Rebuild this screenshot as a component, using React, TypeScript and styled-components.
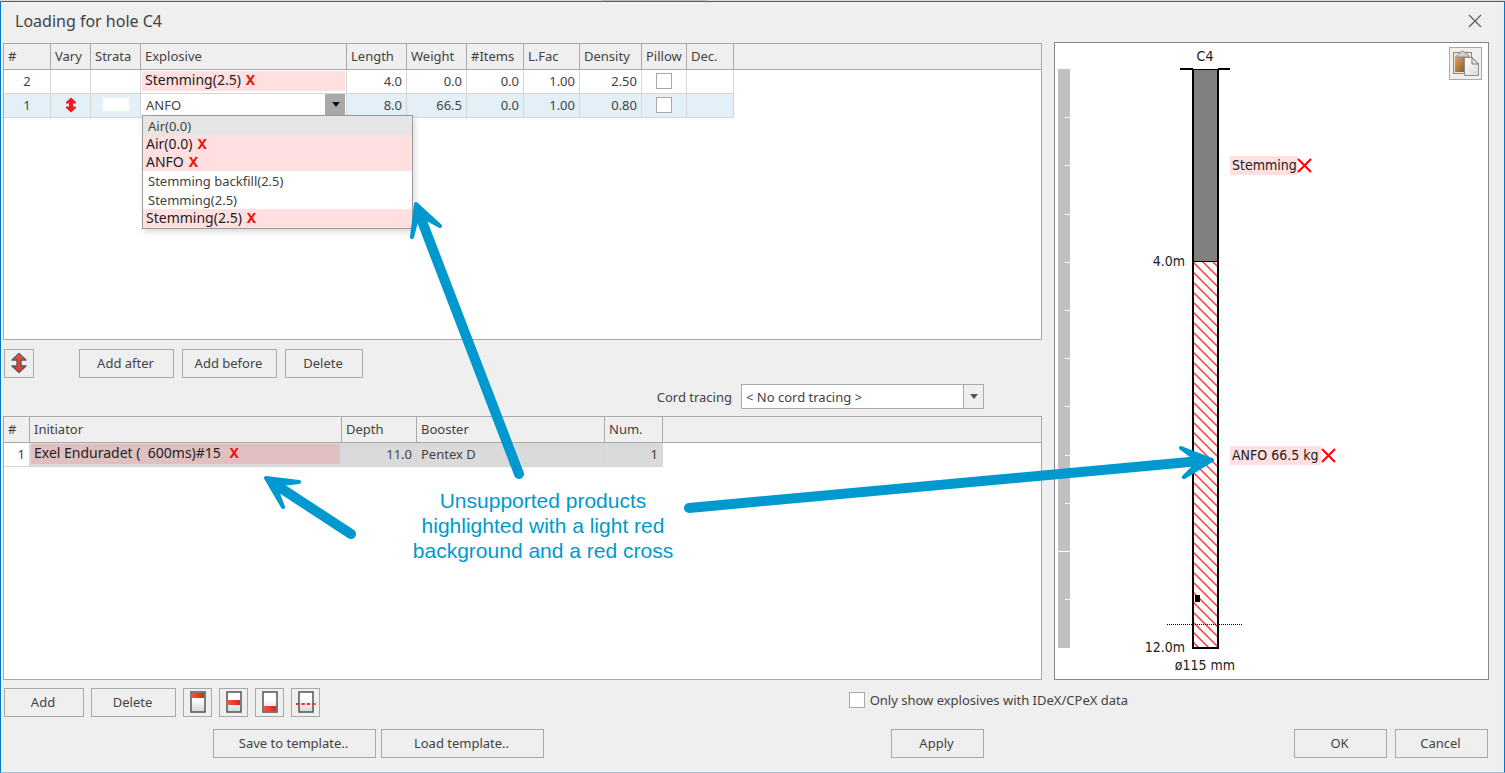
import React, { useState } from "react";
import styled, { createGlobalStyle, css } from "styled-components";

const uiFont = `"Noto Sans", "DejaVu Sans Condensed", sans-serif`;
const drawingFont = `"DejaVu Sans Condensed", "Noto Sans", sans-serif`;
const ink = "#424242";
const line = "#a9a9a9";
const blush = "#ffdfdf";
const marker = "#0099cf";

const GlobalStyle = createGlobalStyle`
  *, *::before, *::after { box-sizing: border-box; }
  body {
    margin: 0;
    background: #efefef;
    color: ${ink};
    font: 13px/16px ${uiFont};
  }
  button, select, input { font: inherit; color: inherit; }
`;

const Page = styled.div`
  position: relative;
  display: flex;
  flex-direction: column;
  min-height: 100vh;
`;

const BackdropStrip = styled.div`
  height: 1px;
  background: linear-gradient(to right, #dcdcdc 40%, #bdbdbd 40%, #bdbdbd 47%, #dcdcdc 47%);
`;

const Dialog = styled.main`
  flex: 1;
  display: flex;
  flex-direction: column;
  padding: 0 15px 14px 2px;
  border: 1px solid #0078d0;
  border-bottom-color: #9fc3df;
  background: #efefef;
`;

const TitleBar = styled.header`
  display: flex;
  align-items: center;
  justify-content: space-between;
  height: 40px;
  padding: 0 7px 3px 12px;
`;

const Title = styled.h1`
  margin: 0;
  font-size: 16px;
  line-height: 20px;
  font-weight: 400;
`;

const CloseButton = styled.button`
  display: flex;
  padding: 0;
  border: 0;
  background: none;
`;

const Body = styled.div`
  flex: 1;
  display: flex;
  gap: 12px;
`;

const Tables = styled.div`
  flex: 1;
  min-width: 0;
  display: flex;
  flex-direction: column;
  padding-top: 1px;
`;

const GridBox = styled.section<{ $grow?: boolean }>`
  border: 1px solid ${line};
  background: #fff;
  ${(p) => (p.$grow ? css`flex: 1;` : css`height: 297px;`)}
`;

const Grid = styled.table`
  width: 100%;
  table-layout: fixed;
  border-collapse: separate;
  border-spacing: 0;
`;

const HeadCell = styled.th`
  height: 26px;
  padding: 0 4px 2px;
  overflow: hidden;
  border-right: 1px solid ${line};
  border-bottom: 1px solid ${line};
  background: #efefef;
  font-weight: 400;
  text-align: left;
  white-space: nowrap;
  &:last-child { border-right: 0; }
`;

const Cell = styled.td<{ $align?: string; $tone?: string; $flush?: boolean }>`
  height: 24px;
  padding: ${(p) => (p.$flush ? "0 1px 2px" : "0 4px 2px")};
  border-right: 1px solid #d6d6d6;
  border-bottom: 1px solid #d6d6d6;
  background: ${(p) => p.$tone ?? "#fff"};
  text-align: ${(p) => p.$align ?? "left"};
  white-space: nowrap;
  & > svg, & > input { display: block; margin: 0 auto; }
`;

const Blank = styled.td``;

const Flagged = styled.div<{ $tone?: string }>`
  height: 20px;
  padding: 0 3px;
  background: ${(p) => p.$tone ?? blush};
  color: #222;
  font-size: 14px;
  line-height: 18px;
  white-space: pre;
`;

const RedX = styled.b`
  margin-left: 5px;
  color: #f01010;
  font-size: 14px;
  font-weight: 700;
`;

const StrataSwatch = styled.div`
  width: 26px;
  height: 13px;
  margin: 0 auto;
  background: #fff;
`;

const Combo = styled.div`
  position: relative;
  display: flex;
  height: 21px;
  background: #fff;
`;

const ComboSelect = styled.select`
  flex: 1;
  padding: 0 4px;
  border: 0;
  background: transparent;
  appearance: none;
  outline: 0;
`;

const ComboArrow = styled.span<{ $dark?: boolean }>`
  position: absolute;
  inset: 0 0 0 auto;
  width: 20px;
  display: flex;
  align-items: center;
  justify-content: center;
  border-left: 1px solid ${line};
  background: ${(p) => (p.$dark ? "#a9a9a9" : "#efefef")};
  color: ${(p) => (p.$dark ? "#111" : "#555")};
  pointer-events: none;
`;

const Options = styled.ul`
  position: absolute;
  top: 21px;
  left: 0;
  z-index: 2;
  width: 271px;
  margin: 0;
  padding: 0 0 1px;
  border: 1px solid #9a9a9a;
  background: ${blush};
  box-shadow: 2px 3px 6px rgba(0, 0, 0, 0.15);
  list-style: none;
`;

const Option = styled.li<{ $flagged?: boolean; $active?: boolean }>`
  height: 19px;
  padding: 0 5px;
  line-height: 20px;
  background: ${(p) => (p.$active ? "#e5e5e5" : "#fff")};
  ${(p) =>
    p.$flagged &&
    css`
      height: 18px;
      padding: 0 3px;
      background: ${blush};
      color: #222;
      font-size: 14px;
      line-height: 18px;
    `}
`;

const Check = styled.input`
  appearance: none;
  width: 16px;
  height: 16px;
  margin: 0;
  border: 1px solid ${line};
  background: #fff;
  &:checked { background: #777; box-shadow: inset 0 0 0 3px #fff; }
`;

const Toolbar = styled.div`
  display: flex;
  align-items: center;
  gap: 8px;
  margin: 9px 0 6px 1px;
`;

const CordRow = styled.div`
  display: flex;
  align-items: center;
  justify-content: flex-end;
  gap: 9px;
  margin-bottom: 7px;
  padding-right: 58px;
`;

const CordCombo = styled(Combo)`
  width: 243px;
  height: 25px;
  border: 1px solid ${line};
`;

const Button = styled.button<{ $w: number }>`
  display: flex;
  align-items: center;
  justify-content: center;
  width: ${(p) => p.$w}px;
  height: 29px;
  padding: 0 2px 2px 0;
  border: 1px solid ${line};
  background: #efefef;
  &:hover { background: #e4eef6; }
`;

const IconButton = styled(Button)`
  padding: 0 0 1px;
`;

const VaryButton = styled(IconButton)`
  margin-right: 37px;
`;

const ActionRow = styled.div`
  display: flex;
  align-items: center;
  gap: 7px;
  margin: 8px 0 12px 1px;
`;

const FilterLabel = styled.label`
  display: flex;
  align-items: center;
  gap: 5px;
  width: 279px;
  margin: 0 361px 0 auto;
  padding-bottom: 6px;
  white-space: nowrap;
`;

const Footer = styled.footer`
  display: flex;
  gap: 5px;
  padding: 0 1px 0 210px;
`;

const Spacer = styled.div`
  flex: 1;
`;

const Decisions = styled.div`
  display: flex;
  gap: 8px;
  margin-left: 305px;
`;

const HolePanel = styled.section`
  position: relative;
  width: 435px;
  border: 1px solid #868686;
  background: #fff;
`;

const HoleDrawing = styled.svg`
  display: block;
  font: 14px ${drawingFont};
  fill: #222;
`;

const PasteButton = styled.button`
  position: absolute;
  top: 4px;
  right: 6px;
  width: 33px;
  height: 33px;
  padding: 0;
  border: 1px solid ${line};
  background: #efefef;
  display: flex;
  align-items: center;
  justify-content: center;
`;

const Arrows = styled.svg`
  position: absolute;
  inset: 0;
  z-index: 3;
  width: 100%;
  height: 100%;
  pointer-events: none;
`;

const Note = styled.p`
  position: absolute;
  top: 488px;
  left: 403px;
  z-index: 3;
  width: 280px;
  margin: 0;
  color: ${marker};
  font: 21px/25px "Liberation Sans", Arial, sans-serif;
  text-align: center;
`;

const Caret = () => (
  <svg width="8" height="5" aria-hidden="true">
    <path d="M0 0H8L4 5Z" fill="currentColor" />
  </svg>
);

const VaryMark = () => (
  <svg width="14" height="16" viewBox="0 0 14 16" role="img" aria-label="Varies">
    <path d="M7 0.5L12 5V6.500H9V9.500H12V11L7 15.5L2 11V9.500H5V6.500H2V5Z" fill="#ec1c24" />
  </svg>
);

const VaryIcon = () => (
  <svg width="18" height="22" viewBox="0 0 18 22" aria-hidden="true">
    <defs>
      <linearGradient id="vary" x1="0" y1="0" x2="0" y2="1">
        <stop offset="0" stopColor="#f46a50" />
        <stop offset="1" stopColor="#e2231a" />
      </linearGradient>
    </defs>
    <path
      d="M9 1.500L16 8H11V14H16L9 20.500L2 14H7V8H2Z"
      fill="url(#vary)"
      stroke="#5a5a5a"
      strokeWidth="1.4"
      strokeLinejoin="round"
    />
    <path d="M9 3.500L12.500 7H10V15H12.500L9 18.500L5.500 15H8V7H5.500Z" fill="#f2402e" />
  </svg>
);

type Band = "top" | "middle" | "bottom" | "dashed";

const PositionIcon = ({ band }: { band: Band }) => {
  const bandY = { top: 2, middle: 9, bottom: 15, dashed: 0 }[band];
  return (
    <svg width="22" height="22" viewBox="0 0 22 22" aria-hidden="true">
      <defs>
        <linearGradient id={`sheet-${band}`} x1="0" y1="0" x2="0" y2="1">
          <stop offset="0.4" stopColor="#fff" />
          <stop offset="1" stopColor="#d4d4d4" />
        </linearGradient>
        <linearGradient id={`band-${band}`}>
          <stop offset="0" stopColor="#f2553c" />
          <stop offset="1" stopColor="#e3211b" />
        </linearGradient>
      </defs>
      <rect x="4" y="1" width="14" height="20" fill={`url(#sheet-${band})`} stroke="#5e5e5e" strokeWidth="1.6" />
      {band === "dashed" ? (
        <path d="M1 13H21" stroke="#f03226" strokeWidth="2" strokeDasharray="3.400 2" />
      ) : (
        <rect x="5" y={bandY} width="12" height="5" fill={`url(#band-${band})`} />
      )}
    </svg>
  );
};

const PasteIcon = () => (
  <svg width="28" height="27" viewBox="0 0 28 27" aria-hidden="true">
    <defs>
      <linearGradient id="board" x1="0" y1="0" x2="1" y2="1">
        <stop offset="0" stopColor="#dba469" />
        <stop offset="1" stopColor="#8f5423" />
      </linearGradient>
      <linearGradient id="page" x1="0" y1="0" x2="1" y2="1">
        <stop offset="0" stopColor="#fff" />
        <stop offset="1" stopColor="#dadada" />
      </linearGradient>
    </defs>
    <rect x="1.5" y="2.5" width="18" height="21" fill="#f3dfc4" stroke="#8b8b8b" />
    <rect x="3" y="7" width="10" height="15" fill="url(#board)" />
    <path d="M3.5 7L7.5 3H8C8 0.5 13 0.5 13 3H14L17.5 7Z" fill="#cfcfcf" stroke="#8b8b8b" />
    <path d="M12.500 7.500H20L26.500 14V25.500H12.500Z" fill="url(#page)" stroke="#8b8b8b" />
    <path d="M20 7.500V14H26.500Z" fill="#e9e9e9" stroke="#777" />
  </svg>
);

type Explosive = {
  no: number;
  length: string;
  weight: string;
  items: string;
  factor: string;
  density: string;
  selected?: boolean;
};

const explosives: Explosive[] = [
  { no: 2, length: "4.0", weight: "0.0", items: "0.0", factor: "1.00", density: "2.50" },
  { no: 1, length: "8.0", weight: "66.5", items: "0.0", factor: "1.00", density: "0.80", selected: true },
];

const products = [
  { name: "Air(0.0)", active: true },
  { name: "Air(0.0)", flagged: true },
  { name: "ANFO", flagged: true },
  { name: "Stemming backfill(2.5)" },
  { name: "Stemming(2.5)" },
  { name: "Stemming(2.5)", flagged: true },
];

const explosiveHeads = ["#", "Vary", "Strata", "Explosive", "Length", "Weight", "#Items", "L.Fac", "Density", "Pillow", "Dec.", ""];
const explosiveWidths = [47, 40, 50, 206, 60, 60, 57, 56, 62, 45, 47];
const initiatorHeads = ["#", "Initiator", "Depth", "Booster", "Num.", ""];
const initiatorWidths = [26, 312, 75, 188, 58];

const Columns = ({ widths }: { widths: number[] }) => (
  <colgroup>
    {widths.map((w, i) => (
      <col key={i} width={w} />
    ))}
    <col />
  </colgroup>
);

const Heads = ({ names }: { names: string[] }) => (
  <thead>
    <tr>
      {names.map((n) => (
        <HeadCell key={n} scope="col">{n}</HeadCell>
      ))}
    </tr>
  </thead>
);

const ExplosiveRow = ({ row }: { row: Explosive }) => {
  const tone = row.selected ? "#e4f0f8" : "#fff";
  return (
    <tr>
      <Cell $tone={tone} $align="center">{row.no}</Cell>
      <Cell $tone={tone} $align="center">{row.selected && <VaryMark />}</Cell>
      <Cell $tone={tone}>{row.selected && <StrataSwatch />}</Cell>
      <Cell $flush>
        {row.selected ? (
          <Combo>
            <ComboSelect aria-label="Explosive" defaultValue="ANFO">
              <option>ANFO</option>
            </ComboSelect>
            <ComboArrow $dark><Caret /></ComboArrow>
            <Options role="listbox" aria-label="Explosives">
              {products.map((p, i) => (
                <Option key={i} role="option" aria-selected={!!p.active} $active={p.active} $flagged={p.flagged}>
                  {p.name}
                  {p.flagged && <RedX>X</RedX>}
                </Option>
              ))}
            </Options>
          </Combo>
        ) : (
          <Flagged>Stemming(2.5)<RedX>X</RedX></Flagged>
        )}
      </Cell>
      <Cell $tone={tone} $align="right">{row.length}</Cell>
      <Cell $tone={tone} $align="right">{row.weight}</Cell>
      <Cell $tone={tone} $align="right">{row.items}</Cell>
      <Cell $tone={tone} $align="right">{row.factor}</Cell>
      <Cell $tone={tone} $align="right">{row.density}</Cell>
      <Cell $tone={tone} $align="center">
        <Check type="checkbox" aria-label={`Pillow, row ${row.no}`} />
      </Cell>
      <Cell $tone={tone} />
      <Blank />
    </tr>
  );
};

const metres = Array.from({ length: 11 }, (_, i) => i + 1);

const Hole = () => (
  <HoleDrawing width="433" height="636" role="img" aria-label="Hole C4 section">
    <defs>
      <pattern id="hatch" width="10" height="10" patternUnits="userSpaceOnUse" x="139" y="0">
        <path d="M-1 -1L11 11M-1 9L1 11M9 -1L11 1" stroke="#ff3a3a" strokeWidth="1.500" />
      </pattern>
    </defs>
    <rect x="3" y="26" width="12" height="579" fill="#c0c0c0" />
    {metres.map((m) => (
      <rect key={m} x={m === 10 ? 3 : 10} y={Math.round(26 + m * 48.2)} width={m === 10 ? 12 : 5} height="1" fill="#fff" />
    ))}
    <rect x="138" y="26" width="25" height="579" fill="#fff" />
    <rect x="139" y="26" width="23" height="193" fill="#808080" />
    <rect x="139" y="219" width="23" height="385" fill="url(#hatch)" />
    <path d="M138 26V605H163V26" fill="none" stroke="#000" strokeWidth="2" />
    <path d="M125 26H138M163 26H175" stroke="#000" strokeWidth="2" />
    <path d="M138 26.500H163M138 218.500H163" stroke="#000" />
    <rect x="140" y="552" width="5" height="7" fill="#000" />
    <path d="M112 581.500H187" stroke="#000" strokeDasharray="1 1" />
    <text x="150" y="18" textAnchor="middle">C4</text>
    <text x="130" y="223" textAnchor="end">4.0m</text>
    <text x="130" y="609" textAnchor="end">12.0m</text>
    <text x="150" y="627" textAnchor="middle">ø115 mm</text>
    <rect x="175" y="113" width="68" height="19" fill={blush} />
    <text x="177" y="127">Stemming</text>
    <path d="M243 116L256 129M256 116L243 129" stroke="#f00" strokeWidth="2" />
    <rect x="175" y="403" width="91" height="19" fill={blush} />
    <text x="177" y="417">ANFO 66.5 kg</text>
    <path d="M267 406L280 419M280 406L267 419" stroke="#f00" strokeWidth="2" />
  </HoleDrawing>
);

export default function App() {
  const [onlyData, setOnlyData] = useState(false);
  return (
    <>
      <GlobalStyle />
      <Page>
        <BackdropStrip />
        <Dialog>
          <TitleBar>
            <Title>Loading for hole C4</Title>
            <CloseButton aria-label="Close">
              <svg width="14" height="14" aria-hidden="true">
                <path d="M1 1L13 13M13 1L1 13" stroke="#606060" strokeWidth="1.3" />
              </svg>
            </CloseButton>
          </TitleBar>
          <Body>
            <Tables>
              <GridBox>
                <Grid>
                  <Columns widths={explosiveWidths} />
                  <Heads names={explosiveHeads} />
                  <tbody>
                    {explosives.map((r) => (
                      <ExplosiveRow key={r.no} row={r} />
                    ))}
                  </tbody>
                </Grid>
              </GridBox>
              <Toolbar>
                <VaryButton $w={30} aria-label="Vary length"><VaryIcon /></VaryButton>
                <Button $w={95}>Add after</Button>
                <Button $w={95}>Add before</Button>
                <Button $w={78}>Delete</Button>
              </Toolbar>
              <CordRow>
                <label htmlFor="cord">Cord tracing</label>
                <CordCombo>
                  <ComboSelect id="cord" defaultValue="none">
                    <option value="none">{"< No cord tracing >"}</option>
                  </ComboSelect>
                  <ComboArrow><Caret /></ComboArrow>
                </CordCombo>
              </CordRow>
              <GridBox $grow>
                <Grid>
                  <Columns widths={initiatorWidths} />
                  <Heads names={initiatorHeads} />
                  <tbody>
                    <tr>
                      <Cell $align="right">1</Cell>
                      <Cell $tone="#dadada" $flush>
                        <Flagged $tone="#dfbfbf">{"Exel Enduradet (  600ms)#15 "}<RedX>X</RedX></Flagged>
                      </Cell>
                      <Cell $tone="#dadada" $align="right">11.0</Cell>
                      <Cell $tone="#dadada">Pentex D</Cell>
                      <Cell $tone="#dadada" $align="right">1</Cell>
                      <Blank />
                    </tr>
                  </tbody>
                </Grid>
              </GridBox>
            </Tables>
            <HolePanel>
              <Hole />
              <PasteButton aria-label="Paste"><PasteIcon /></PasteButton>
            </HolePanel>
          </Body>
          <ActionRow>
            <Button $w={80}>Add</Button>
            <Button $w={85}>Delete</Button>
            <IconButton $w={29} aria-label="Place at top"><PositionIcon band="top" /></IconButton>
            <IconButton $w={29} aria-label="Place in middle"><PositionIcon band="middle" /></IconButton>
            <IconButton $w={29} aria-label="Place at bottom"><PositionIcon band="bottom" /></IconButton>
            <IconButton $w={29} aria-label="Place at grade"><PositionIcon band="dashed" /></IconButton>
            <FilterLabel>
              <Check type="checkbox" checked={onlyData} onChange={(e) => setOnlyData(e.target.checked)} />
              Only show explosives with IDeX/CPeX data
            </FilterLabel>
          </ActionRow>
          <Footer>
            <Button $w={163}>Save to template..</Button>
            <Button $w={163}>Load template..</Button>
            <Spacer />
            <Button $w={93}>Apply</Button>
            <Decisions>
              <Button $w={93}>OK</Button>
              <Button $w={93}>Cancel</Button>
            </Decisions>
          </Footer>
        </Dialog>
        <Arrows aria-hidden="true" fill={marker} stroke={marker} strokeLinejoin="round" strokeLinecap="round">
          <path d="M519 474L420 216M351 534L276 485M689 508L1200 461" strokeWidth="10" />
          <path
            d="M416 204L440 226L425 218L417 218L412 237ZM266 478L299 482L282 484L277 491L283 507ZM1212 460L1181 448L1193 457L1194 467L1184 477Z"
            strokeWidth="4"
          />
        </Arrows>
        <Note>Unsupported products highlighted with a light red background and a red cross</Note>
      </Page>
    </>
  );
}
